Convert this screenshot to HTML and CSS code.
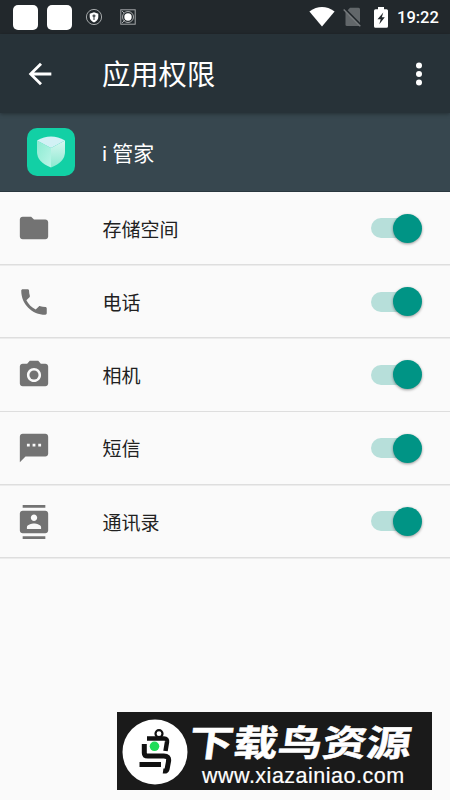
FILE: index.html
```html
<!DOCTYPE html>
<html lang="zh-CN">
<head>
<meta charset="utf-8">
<title>应用权限</title>
<link rel="stylesheet" href="styles.css">
</head>
<body>
<div class="screen">
  <header class="status">
    <span class="tile"></span>
    <span class="tile"></span>
    <svg class="notice" viewBox="0 0 18 18"><circle cx="9" cy="9" r="7.6" fill="none" stroke="#a5a8aa" stroke-width="1"/><path d="M9 4.2 13.3 5.8V9c0 2.600-1.800 4.300-4.300 5.400C6.500 13.300 4.700 11.600 4.700 9V5.800z" fill="#fff"/><path d="M9 6.400a1.500 1.500 0 0 0-.6 2.900V12h1.200V9.300A1.500 1.500 0 0 0 9 6.400z" fill="#50565a"/></svg>
    <svg class="notice second" viewBox="0 0 18 18"><rect x="1.800" y="1.800" width="14.400" height="14.400" fill="none" stroke="#a5a8aa"/><circle cx="9" cy="9" r="5.500" fill="none" stroke="#a5a8aa"/><circle cx="9" cy="9" r="3.700" fill="#fff"/><path d="M3 15l3-3M3 3l2 2" stroke="#a5a8aa"/></svg>
    <div class="system">
      <svg class="wifi" viewBox="0 0 26 20"><path d="M.4 4.400Q13-4.400 25.600 4.400L13 19.600z" fill="#fff"/></svg>
      <svg class="sim" viewBox="0 0 19 20"><path d="M2.500 5.500 7 .7h8.500q1.500 0 1.500 1.500V18q0 1-1.500 1H4q-1.500 0-1.500-1z" fill="#62676a"/><path d="M1.500 1.500 18.500 18.700" stroke="#22282c" stroke-width="2"/><path d="M.7 2.500 17.300 19.200" stroke="#777b7e" stroke-width="1.400"/></svg>
      <svg class="battery" viewBox="0 0 14 21"><path d="M4 0h6v2.200h2.500q1.500 0 1.500 1.500v15.500q0 1.500-1.500 1.500h-11Q0 20.700 0 19.200V3.700q0-1.500 1.500-1.500H4z" fill="#fff"/><path d="M9.300 5.500 3.500 12.300h3.200L5.300 17.300l5.500-7H7.800z" fill="#22282c"/></svg>
      <time>19:22</time>
    </div>
  </header>
  <nav class="bar">
    <svg class="back" viewBox="0 0 24 24"><path d="M20 11H7.830l5.590-5.590L12 4l-8 8 8 8 1.410-1.410L7.830 13H20v-2z"/></svg>
    <h1>应用权限</h1>
    <svg class="more" viewBox="0 0 8 26"><circle cx="4" cy="4.500" r="3"/><circle cx="4" cy="13" r="3"/><circle cx="4" cy="21.500" r="3"/></svg>
  </nav>
  <section class="app">
    <svg class="logo" viewBox="0 0 48 48">
      <defs><linearGradient id="left" x2="1" y2="1"><stop stop-color="#8cebd2"/><stop offset="1" stop-color="#baf5e7"/></linearGradient><linearGradient id="right" x2="0" y2="1"><stop stop-color="#d8f7f1"/><stop offset="1" stop-color="#8ce9d0"/></linearGradient></defs>
      <rect width="48" height="48" rx="10" fill="#12d0a5"/>
      <path d="M10 12.500 24 20v19.500Q10 34 10 24z" fill="url(#left)"/>
      <path d="M38 12.500 24 20v19.500Q38 34 38 24z" fill="url(#right)"/>
      <path d="M10 12.500Q24 4.500 38 12.500L24 20z" fill="#d2f1f5"/>
    </svg>
    <h2>i 管家</h2>
  </section>
  <ul class="list">
    <li><svg class="icon" viewBox="0 0 24 24"><path d="M10 4H4c-1.100 0-2 .9-2 2v12c0 1.100.9 2 2 2h16c1.100 0 2-.9 2-2V8c0-1.100-.9-2-2-2h-8z"/></svg><span class="name">存储空间</span><i class="switch"></i></li>
    <li><svg class="icon" viewBox="0 0 24 24"><path d="M6.620 10.790c1.440 2.830 3.760 5.140 6.590 6.590l2.200-2.200c.27-.27.67-.36 1.020-.24 1.120.37 2.330.57 3.570.57.55 0 1 .45 1 1V20c0 .55-.45 1-1 1-9.390 0-17-7.610-17-17 0-.55.45-1 1-1h3.500c.55 0 1 .45 1 1 0 1.250.2 2.450.57 3.570.11.35.03.74-.25 1.020z"/></svg><span class="name">电话</span><i class="switch"></i></li>
    <li><svg class="icon" viewBox="0 0 24 24"><circle cx="12" cy="12" r="3.200"/><path d="M9 2 7.170 4H4c-1.100 0-2 .9-2 2v12c0 1.100.9 2 2 2h16c1.100 0 2-.9 2-2V6c0-1.100-.9-2-2-2h-3.170L15 2zm3 15c-2.760 0-5-2.240-5-5s2.240-5 5-5 5 2.240 5 5-2.240 5-5 5z"/></svg><span class="name">相机</span><i class="switch"></i></li>
    <li><svg class="icon" viewBox="0 0 24 24"><path d="M20 2H4c-1.100 0-1.990.9-1.990 2L2 22l4-4h14c1.100 0 2-.9 2-2V4c0-1.100-.9-2-2-2zM9 11H7V9h2zm4 0h-2V9h2zm4 0h-2V9h2z"/></svg><span class="name">短信</span><i class="switch"></i></li>
    <li><svg class="icon" viewBox="0 0 24 24"><path d="M20 0H4v2h16zM4 24h16v-2H4zM20 4H4c-1.100 0-2 .9-2 2v12c0 1.100.9 2 2 2h16c1.100 0 2-.9 2-2V6c0-1.100-.9-2-2-2zm-8 2.750c1.240 0 2.250 1.010 2.250 2.250s-1.010 2.250-2.250 2.250S9.750 10.240 9.750 9 10.760 6.750 12 6.750zM17 17H7v-1.500c0-1.670 3.330-2.500 5-2.500s5 .83 5 2.500z"/></svg><span class="name">通讯录</span><i class="switch"></i></li>
  </ul>
  <aside class="mark">
    <svg class="bird" viewBox="0 0 66 66"><circle cx="33" cy="33" r="32.500" fill="#fff"/><g fill="none" stroke="#111"><circle cx="37" cy="14.700" r="3.500" stroke-width="2.200"/><path d="M25 19.500h17q3.500 0 3 3.500L43.500 32" stroke-width="4.500"/><path d="M22.300 25v9q0 3 3.500 3h16q5.500 0 4.800 5l-1.500 8q-.5 2.500-4 2" stroke-width="5"/><path d="M17.500 45.500H39" stroke-width="5"/></g><circle cx="32.500" cy="27.300" r="4.800" fill="#20dc58"/></svg>
    <div class="words"><strong>下载鸟资源</strong><span>www.xiazainiao.com</span></div>
  </aside>
</div>
</body>
</html>
```
FILE: styles.css
```css
* { box-sizing: border-box; }
body { margin: 0; background: #fafafa; font-family: Roboto, "Noto Sans CJK SC", sans-serif; }
.screen { position: relative; display: flex; flex-direction: column; width: 450px; height: 800px; overflow: hidden; }
h1, h2 { margin: 0; font-weight: 400; color: #fff; }
svg { display: block; flex: none; }
.status { display: flex; align-items: center; height: 34px; padding: 0 12px 0 13px; background: #22282c; }
.tile { width: 25px; height: 25px; margin-right: 9px; border-radius: 5px; background: #fff; }
.notice { width: 18px; height: 18px; margin-left: 4px; }
.notice.second { margin-left: 16px; }
.system { display: flex; align-items: center; margin-left: auto; color: #fff; }
.wifi { width: 26px; height: 20px; margin-right: 8px; }
.sim { width: 19px; height: 20px; margin-right: 12px; }
.battery { width: 14px; height: 21px; margin-right: 9px; }
.system time { width: 41px; padding-top: 1px; font-size: 16.5px; font-weight: 500; line-height: 20px; white-space: nowrap; }
.bar { position: relative; display: flex; align-items: center; height: 79px; padding: 0 27px 0 23px; background: #273238; box-shadow: 0 1px 4px rgba(0, 0, 0, .35); }
.back { width: 34px; height: 34px; margin-top: 1px; fill: #fff; }
.bar h1 { margin-left: 45px; padding-top: 4px; font-size: 28.300px; line-height: 40px; }
.more { width: 8px; height: 26px; margin-left: auto; fill: #fff; }
.app { display: flex; align-items: center; height: 79px; padding-left: 26.500px; background: #37474f; border-bottom: 1px solid #29373e; }
.logo { width: 48px; height: 48px; }
.app h2 { margin-left: 27.500px; padding-top: 3px; font-size: 21px; line-height: 30px; }
.list { margin: 0; padding: .4px 0 0; list-style: none; }
.list li { display: flex; align-items: center; height: 73.300px; padding: 0 29px 0 17px; background: linear-gradient(#dedede, #dedede) 0 100% / 100% 1.500px no-repeat; }
.icon { width: 34px; height: 34px; margin-top: -1.400px; fill: #737373; }
.name { margin-left: 51.500px; padding-top: 3px; color: #212121; font-size: 19px; line-height: 28px; }
.switch { position: relative; width: 50px; height: 20px; margin-top: -1.500px; margin-left: auto; border-radius: 10px; background: linear-gradient(90deg, #b7dfda 40px, transparent 40px); }
.switch::after { position: absolute; top: -4.500px; right: -.5px; width: 29px; height: 29px; border-radius: 50%; background: #009485; box-shadow: 0 1px 3px rgba(0, 0, 0, .4); content: ""; }
.mark { position: absolute; left: 117px; top: 712px; display: flex; width: 315px; height: 78px; padding: 7px 0 0 5px; background: #1a1a1a; }
.bird { width: 66px; height: 66px; }
.words { display: flex; flex-direction: column; color: #fff; }
.words strong { width: 180px; margin-left: 1px; font-size: 36px; font-weight: 700; line-height: 49px; white-space: nowrap; transform: translateY(1px) scaleX(1.235) skewX(-6deg); transform-origin: 0 50%; -webkit-text-stroke: .5px #fff; }
.words span { margin: -4px 0 0 14px; font-family: "Liberation Sans", sans-serif; font-size: 21.500px; line-height: 24px; letter-spacing: .5px; -webkit-text-stroke: .2px #fff; }
```
